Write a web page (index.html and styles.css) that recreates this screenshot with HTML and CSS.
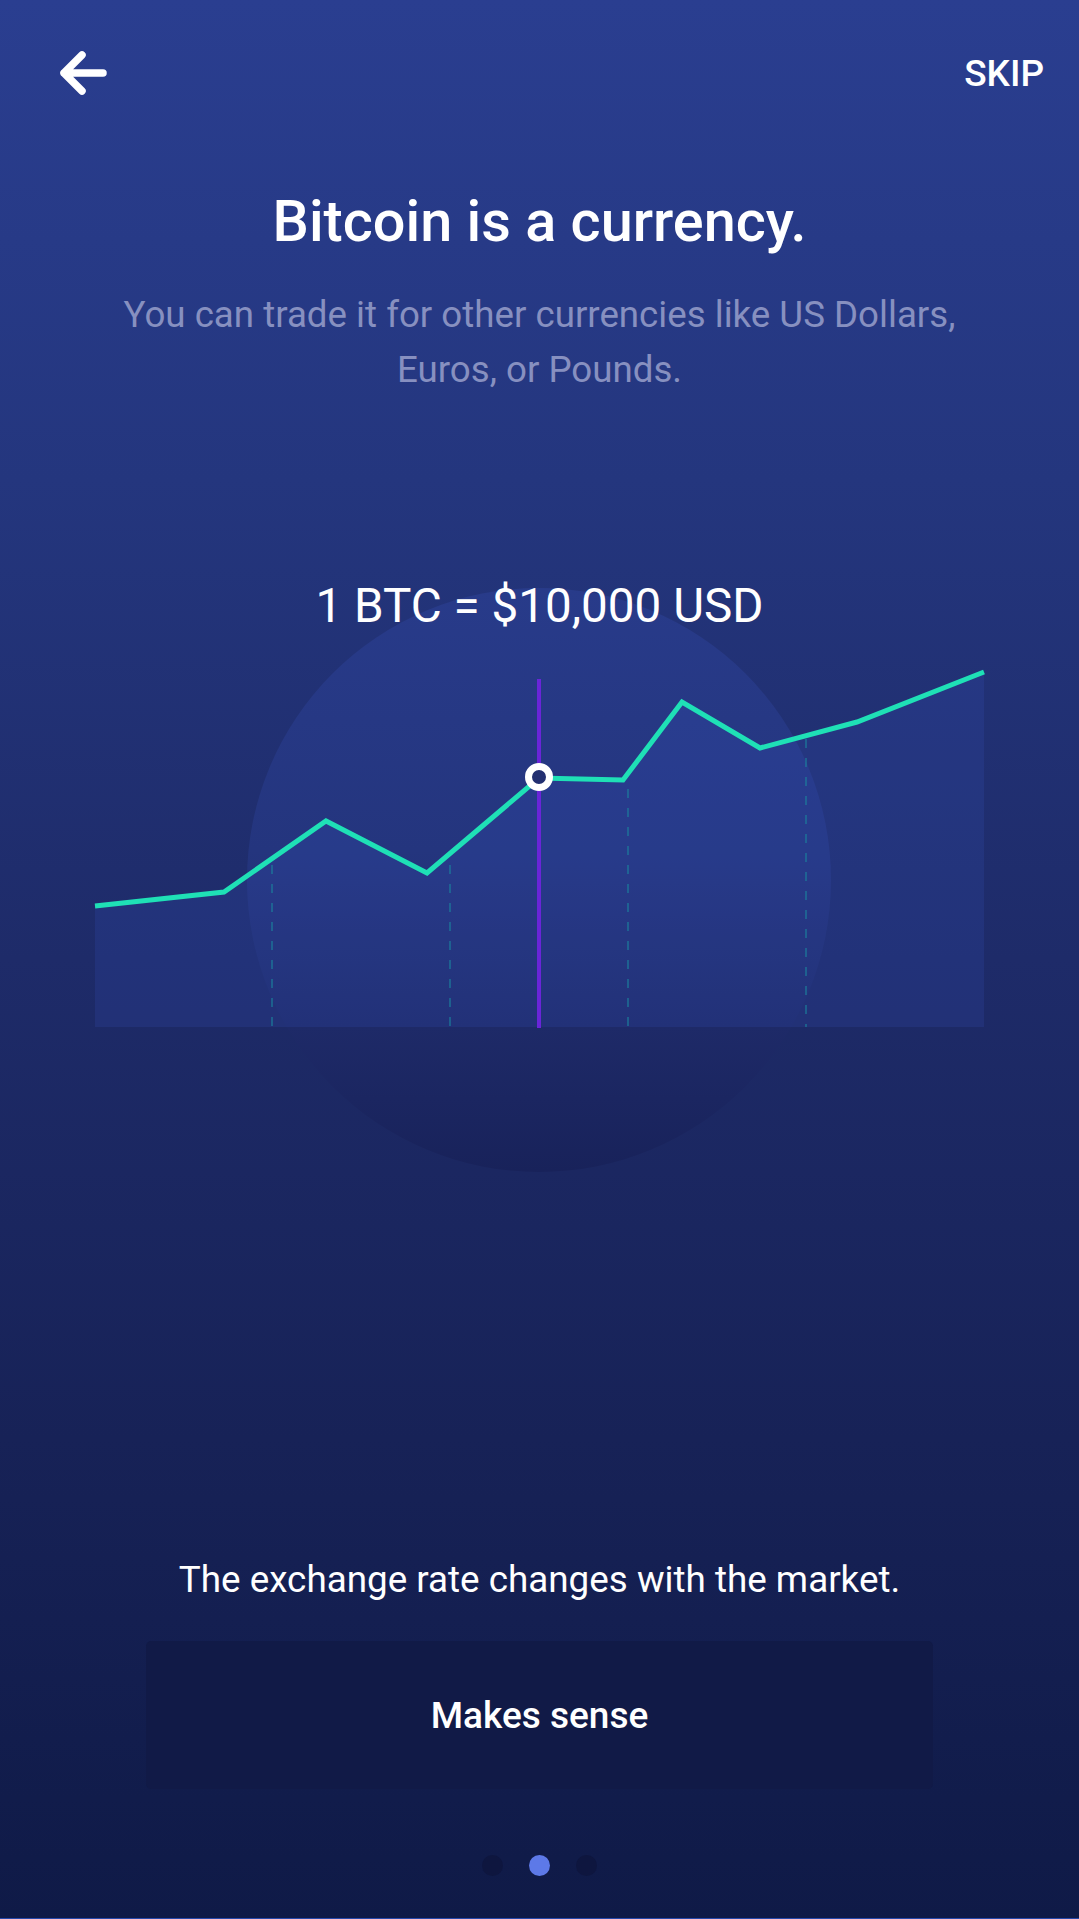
FILE: index.html
```html
<!DOCTYPE html>
<html lang="en">
<head>
<meta charset="utf-8">
<title>Bitcoin is a currency</title>
<link rel="stylesheet" href="styles.css">
</head>
<body>
<main class="screen">
  <header class="topbar">
    <button class="back" aria-label="Back">
      <svg width="48" height="46" viewBox="0 0 48 46">
        <path d="M5 23 H44 M5 23 L23 5 M5 23 L23 41" fill="none" stroke="#fff" stroke-width="7.5" stroke-linecap="round" stroke-linejoin="round"/>
      </svg>
    </button>
    <button class="skip">SKIP</button>
  </header>

  <h1 class="title">Bitcoin is a currency.</h1>
  <p class="subtitle">You can trade it for other currencies like US Dollars,<br>Euros, or Pounds.</p>

  <section class="stage">
    <div class="rate">1 BTC = $10,000 USD</div>
    <svg class="chart" width="1079" height="400" viewBox="0 0 1079 400">
      <polygon class="area" points="95,267 224,253 326,182 427,234 539,139 623,141 682,63 760,109 857,83 984,33 984,388 95,388"/>
      <g class="grid">
        <line x1="272" y1="226" x2="272" y2="388"/>
        <line x1="450" y1="226" x2="450" y2="388"/>
        <line x1="628" y1="150" x2="628" y2="388"/>
        <line x1="806" y1="100" x2="806" y2="388"/>
      </g>
      <line class="cursor" x1="539" y1="40" x2="539" y2="389"/>
      <polyline class="trend" points="95,267 224,253 326,182 427,234 539,139 623,141 682,63 760,109 857,83 984,33"/>
      <circle class="marker" cx="539" cy="138" r="10.5"/>
    </svg>
  </section>

  <div class="spacer"></div>

  <p class="note">The exchange rate changes with the market.</p>
  <button class="cta">Makes sense</button>
  <nav class="dots">
    <span class="dot"></span>
    <span class="dot active"></span>
    <span class="dot"></span>
  </nav>
</main>
</body>
</html>
```
FILE: styles.css
```css
* { box-sizing: border-box; }

html, body {
  margin: 0;
  padding: 0;
}

body {
  width: 1079px;
  height: 1919px;
  overflow: hidden;
  font-family: Roboto, "Liberation Sans", sans-serif;
  color: #fff;
  background: #101a47;
}

.screen {
  width: 1079px;
  height: 1919px;
  display: flex;
  flex-direction: column;
  align-items: center;
  background: linear-gradient(180deg, #2a3e90 0%, #24367e 25%, #1e2b69 50%, #172257 75%, #0f1a47 100%);
  border-bottom: 1px solid #2648ab;
}

.topbar {
  width: 100%;
  height: 146px;
  display: flex;
  align-items: center;
  justify-content: space-between;
  padding: 0 35px 0 59px;
}

.back, .skip, .cta {
  border: 0;
  background: none;
  color: #fff;
  font-family: inherit;
  padding: 0;
  cursor: pointer;
}

.back {
  display: flex;
  width: 48px;
  height: 46px;
}

.skip {
  font-size: 37px;
  font-weight: 500;
  letter-spacing: 0;
}

.title {
  margin: 42px 0 0;
  font-size: 57.6px;
  line-height: 68px;
  font-weight: 500;
  text-align: center;
}

.subtitle {
  margin: 31px 0 0;
  font-size: 36.7px;
  line-height: 55px;
  color: #8790c0;
  text-align: center;
}

.stage {
  position: relative;
  width: 100%;
  margin-top: 179px;
  display: flex;
  flex-direction: column;
  align-items: center;
}

.stage::before {
  content: "";
  position: absolute;
  top: 12px;
  left: 247px;
  width: 584px;
  height: 584px;
  border-radius: 50%;
  background: linear-gradient(180deg, #283b8a 0%, #24357e 45%, #1e2a68 75%, #18225a 100%);
  z-index: 0;
}

.rate {
  position: relative;
  z-index: 1;
  font-size: 47.6px;
  line-height: 60px;
  font-weight: 400;
}

.chart {
  position: relative;
  z-index: 1;
  display: block;
  margin-top: 3px;
}

.area { fill: rgba(60, 90, 200, 0.17); }

.grid line {
  stroke: #1c7f9c;
  stroke-opacity: 0.75;
  stroke-width: 1.6;
  stroke-dasharray: 9 10;
}

.cursor {
  stroke: #6a25d8;
  stroke-width: 4;
}

.trend {
  fill: none;
  stroke: #1fe0b6;
  stroke-width: 5;
  stroke-linejoin: miter;
}

.marker {
  fill: #222f70;
  stroke: #fff;
  stroke-width: 7;
}

.spacer { flex: 1; }

.note {
  margin: 0;
  font-size: 36.8px;
  line-height: 48px;
  text-align: center;
}

.cta {
  margin-top: 37px;
  width: 787px;
  height: 148px;
  border-radius: 5px;
  background: #111a47;
  font-size: 37px;
  font-weight: 500;
}

.dots {
  display: flex;
  gap: 26px;
  margin: 66px 0 42px;
}

.dot {
  width: 21px;
  height: 21px;
  border-radius: 50%;
  background: #0e163f;
}

.dot.active { background: #5d79e8; }
```
